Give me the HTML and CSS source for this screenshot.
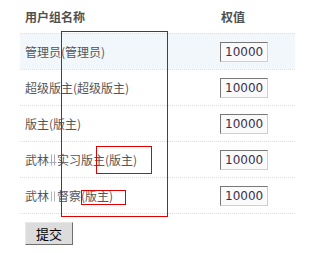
FILE: index.html
```html
<!DOCTYPE html>
<html lang="zh-CN">
<head>
<meta charset="utf-8">
<title>用户组权值</title>
<link rel="stylesheet" href="styles.css">
</head>
<body>
<div class="page">
  <div class="groups">
    <div class="row head">
      <div class="name">用户组名称</div>
      <div class="weight">权值</div>
    </div>
    <div class="row alt">
      <div class="name">管理员(管理员)</div>
      <div class="weight"><input class="w" type="text" value="10000"></div>
    </div>
    <div class="row">
      <div class="name">超级版主(超级版主)</div>
      <div class="weight"><input class="w" type="text" value="10000"></div>
    </div>
    <div class="row">
      <div class="name">版主(版主)</div>
      <div class="weight"><input class="w" type="text" value="10000"></div>
    </div>
    <div class="row">
      <div class="name">武林<span class="sep"><svg width="8" height="12" viewBox="0 0 8 12"><path d="M2.5 0.5V11.5M5.5 0.5V11.5M0.5 8.5H7.5" stroke="#a9a9bb" stroke-width="1" fill="none"/></svg></span>实习版主(版主)</div>
      <div class="weight"><input class="w" type="text" value="10000"></div>
    </div>
    <div class="row last">
      <div class="name">武林<span class="sep"><svg width="8" height="12" viewBox="0 0 8 12"><path d="M2.5 1.5V11.5M5.5 1.5V11.5" stroke="#b4b4c4" stroke-width="1" fill="none"/></svg></span>督察(版主)</div>
      <div class="weight"><input class="w" type="text" value="10000"></div>
    </div>
  </div>
  <div class="actions"><button class="submit" type="button">提交</button></div>

  <div class="mark mark-big"></div>
  <div class="mark mark-one"></div>
  <div class="mark mark-two"></div>
</div>
</body>
</html>
```
FILE: styles.css
```css
html, body {
  margin: 0;
  padding: 0;
  background: #fff;
}
body {
  font-family: "Noto Sans CJK SC", "Noto Sans", sans-serif;
  font-size: 12px;
  color: #555;
}
.page {
  position: relative;
  width: 295px;
  height: 253px;
  overflow: hidden;
}
.groups {
  margin-left: 20px;
  width: 275px;
}
.row {
  display: flex;
  align-items: center;
  height: 35px;
  border-top: 1px dotted #cfe2ee;
}
.row.head {
  height: 33px;
  border-top: 0;
  font-weight: bold;
  font-size: 12px;
  color: #505050;
}
.row.alt {
  background: #f1f7fb;
}
.row.last {
  border-bottom: 1px dotted #cfe2ee;
}
.name {
  width: 190px;
  padding-left: 5px;
  white-space: nowrap;
  line-height: 14px;
}
.weight {
  padding-left: 5px;
  display: flex;
  align-items: center;
}
.head .weight {
  padding-left: 6px;
}
.sep {
  display: inline-block;
  width: 8px;
  height: 12px;
  vertical-align: -1px;
}
.sep svg {
  display: block;
}
.w {
  box-sizing: border-box;
  width: 48px;
  height: 20px;
  margin: 0;
  padding: 0 0 0 4px;
  border: 1px solid;
  border-color: #777 #cfcfcf #cfcfcf #777;
  background: #fafafa;
  font-family: "DejaVu Sans", sans-serif;
  font-size: 12px;
  color: #3a2f4a;
  outline: none;
}
.actions {
  padding: 8px 0 0 25px;
}
.submit {
  box-sizing: border-box;
  width: 48px;
  height: 23px;
  margin: 0;
  padding: 0;
  border: 1px solid;
  border-color: #e8e8e8 #6f6f6f #6f6f6f #e8e8e8;
  background: #dcdcdc;
  color: #000;
  font-family: "Noto Sans CJK SC", sans-serif;
  font-size: 13px;
  line-height: 20px;
}
.mark {
  position: absolute;
  box-sizing: border-box;
  border: 1px solid #e00000;
}
.mark-big {
  left: 61px;
  top: 31px;
  width: 107px;
  height: 186px;
}
.mark-one {
  left: 96px;
  top: 146px;
  width: 56px;
  height: 28px;
}
.mark-two {
  left: 81px;
  top: 190px;
  width: 45px;
  height: 15px;
}
```
